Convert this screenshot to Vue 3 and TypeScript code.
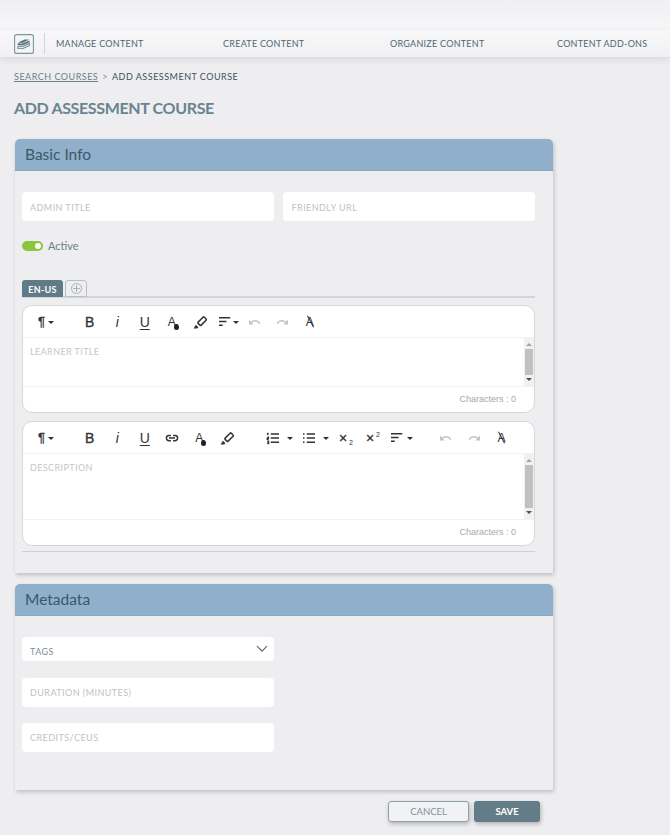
<script setup lang="ts">
type Tool = { id: string; w: number; text?: string; cls?: string; d?: string; tip?: string; fill?: boolean; caret?: boolean; dim?: boolean; sub?: string; sup?: string; drop?: boolean; after?: number };

const paths: Record<string, string> = {
  brush: 'M9.5 12.2l6.6-6.6c.5-.5 1.1-.5 1.6 0l2.4 2.4c.5.5.5 1.1 0 1.6l-6.6 6.6c-.5.5-1.1.5-1.6 0l-2.4-2.4c-.5-.5-.5-1.1 0-1.6z',
  brushTip: 'M3.5 20.5l3-5 3.4 3.4-1.6 1.6z',
  align: 'M4 6.2h15M4 11.2h10M4 16.2h5',
  undo: 'M4 8.8v6.4h6.2l-2.3-2.3c3-2.6 7-2 9.6 1.7l1.8-1.1c-3-4.8-8.5-5.6-12.8-2.1z',
  redo: 'M20 8.8v6.4h-6.2l2.3-2.3c-3-2.6-7-2-9.6 1.7l-1.8-1.1c3-4.8 8.5-5.6 12.8-2.1z',
  link: 'M10.5 8.5H8a3.5 3.5 0 0 0 0 7h2.5M13.5 8.5H16a3.5 3.5 0 0 1 0 7h-2.5M8 12h8',
  ol: 'M9 6.5h11M9 12h11M9 17.5h11M5 5v3M4.4 11h1.4v1.6H4.4v1.2h1.6M4.4 16.4h1.6v3H4.4M4.6 17.9H6',
  ul: 'M9 6.5h11M9 12h11M9 17.5h11M4 6.5h2M4 12h2M4 17.5h2',
};

const base: Tool[] = [
  { id: 'para', w: 48, text: '¶', cls: 'para', caret: true },
  { id: 'b', w: 27.5, text: 'B', cls: 'bold' },
  { id: 'i', w: 27.5, text: 'i', cls: 'ital' },
  { id: 'u', w: 27.5, text: 'U', cls: 'under' },
];

const first: Tool[] = [
  ...base,
  { id: 'color', w: 27.5, text: 'A', cls: 'alpha', drop: true },
  { id: 'brush', w: 27.5, d: paths.brush, tip: paths.brushTip },
  { id: 'align', w: 27.5, d: paths.align, cls: 'left2', caret: true },
  { id: 'undo', w: 27.5, d: paths.undo, fill: true, dim: true },
  { id: 'redo', w: 27.5, d: paths.redo, fill: true, dim: true },
  { id: 'clear', w: 27.5, text: 'A', cls: 'clear' },
];

const second: Tool[] = [
  ...base,
  { id: 'link', w: 27.5, d: paths.link },
  { id: 'color', w: 27.5, text: 'A', cls: 'alpha', drop: true },
  { id: 'brush', w: 27.5, d: paths.brush, tip: paths.brushTip, after: 18 },
  { id: 'ol', w: 36, d: paths.ol, cls: 'left4', caret: true },
  { id: 'ul', w: 36, d: paths.ul, cls: 'left4', caret: true },
  { id: 'sub', w: 28, text: '×', cls: 'times shift2', sub: '2' },
  { id: 'sup', w: 28, text: '×', cls: 'times shift3', sup: '2' },
  { id: 'align', w: 28, d: paths.align, cls: 'left4', caret: true, after: 17 },
  { id: 'undo', w: 28, d: paths.undo, fill: true, dim: true },
  { id: 'redo', w: 28, d: paths.redo, fill: true, dim: true },
  { id: 'clear', w: 27, text: 'A', cls: 'clear' },
];

const editors = [
  { id: 'title', label: 'LEARNER TITLE', tools: first, cls: 'short' },
  { id: 'desc', label: 'DESCRIPTION', tools: second, cls: 'tall' },
];

const nav = ['MANAGE CONTENT', 'CREATE CONTENT', 'ORGANIZE CONTENT', 'CONTENT ADD-ONS'];
</script>

<template>
  <div class="page">
    <div class="topband"></div>
    <nav class="navbar">
      <span class="logo">
        <svg width="20" height="20" viewBox="0 0 20 20">
          <rect x="0.6" y="0.6" width="18.8" height="18.8" rx="2" fill="#f4f5f6" stroke="#7d95a1" stroke-width="1.1" />
          <path d="M4 8.6l6.6-3.2h4.8l-6.8 3.6z" fill="#5c7480" />
          <path d="M3.6 9.6c1.2-.7 3-.5 5 0l7-3.2v2l-7 3.2c-2-.5-3.8-.6-5 0z" fill="#5c7480" />
          <path d="M3.8 12.6c1.1-.6 2.9-.4 4.8.1l7-3.2v2l-7 3.2c-2-.5-3.7-.6-4.8 0z" fill="none" stroke="#5c7480" stroke-width=".9" />
        </svg>
      </span>
      <span class="divider"></span>
      <ul class="menu">
        <li v-for="item in nav" :key="item">{{ item }}</li>
      </ul>
    </nav>

    <main class="main">
      <div class="crumbs"><a>SEARCH COURSES</a><i>&gt;</i><span>ADD ASSESSMENT COURSE</span></div>
      <h1>ADD ASSESSMENT COURSE</h1>

      <section class="card basic">
        <h2>Basic Info</h2>
        <div class="body">
          <div class="row">
            <div class="field">ADMIN TITLE</div>
            <div class="field url">FRIENDLY URL</div>
          </div>
          <div class="active"><span class="toggle"><b></b></span><span class="active-label">Active</span></div>
          <div class="tabs">
            <span class="tab">EN-US</span>
            <span class="add">
              <svg width="13" height="13" viewBox="0 0 13 13" fill="none" stroke="#a3adb3" stroke-width=".9"><circle cx="6.5" cy="6.5" r="5" /><path d="M6.5 3v7M3 6.5h7" /></svg>
            </span>
          </div>
          <div v-for="ed in editors" :key="ed.id" class="editor" :class="ed.cls">
            <div class="toolbar">
              <span
                v-for="t in ed.tools"
                :key="t.id"
                class="tool"
                :class="[{ dim: t.dim }, t.id === 'para' ? 'first' : '']"
                :style="{ width: t.w + 'px', marginRight: (t.after ?? 0) + 'px' }"
              >
                <span v-if="t.text" class="glyph" :class="t.cls">{{ t.text }}<sub v-if="t.sub">{{ t.sub }}</sub><sup v-if="t.sup">{{ t.sup }}</sup><em v-if="t.drop"></em></span>
                <svg v-else :class="t.cls" width="18" height="18" viewBox="0 0 24 24" :fill="t.fill ? 'currentColor' : 'none'" :stroke="t.fill ? 'none' : 'currentColor'" stroke-width="2">
                  <path :d="t.d" />
                  <path v-if="t.tip" :d="t.tip" fill="currentColor" stroke="none" />
                </svg>
                <span v-if="t.caret" class="caret"></span>
              </span>
            </div>
            <div class="edit-body">
              <div class="ph">{{ ed.label }}</div>
              <div class="scroll"><span class="up"></span><span class="thumb"></span><span class="down"></span></div>
            </div>
            <div class="count">Characters : 0</div>
          </div>
          <hr />
        </div>
      </section>

      <section class="card meta">
        <h2>Metadata</h2>
        <div class="body">
          <div class="field half tags">
            <span>TAGS</span>
            <svg width="12" height="8" viewBox="0 0 12 8" fill="none" stroke="#5d6468" stroke-width="1.1"><path d="M1 1.2l5 5 5-5" /></svg>
          </div>
          <div class="field half dur">DURATION (MINUTES)</div>
          <div class="field half cred">CREDITS/CEUS</div>
        </div>
      </section>

      <div class="actions">
        <button class="cancel">CANCEL</button>
        <button class="save">SAVE</button>
      </div>
    </main>
  </div>
</template>

<style>
html, body { margin: 0; background: #eeeef0; }
</style>

<style scoped>
* { box-sizing: border-box; }
.page { width: 670px; height: 835px; overflow: hidden; background: #eeeef0; font-family: Lato, "Open Sans", sans-serif; }
.topband { height: 30px; background: linear-gradient(#f0f0f2, #f7f7f9); }
.navbar { position: relative; height: 27px; display: flex; align-items: center; padding-left: 14px; background: linear-gradient(#f8f8f9, #f1f1f3); box-shadow: 0 2px 8px rgba(0, 0, 0, .1); }
.logo { display: flex; width: 20px; height: 20px; }
.divider { width: 1px; height: 21px; margin-left: 10px; background: #d3d6d8; }
.menu { list-style: none; margin: 0 0 0 11px; padding: 0; flex: 1; display: flex; font-size: 9px; letter-spacing: .26px; color: #50666f; }
.menu li:nth-child(1) { width: 167px; }
.menu li:nth-child(2) { width: 167px; }
.menu li:nth-child(3) { width: 167px; }
.main { padding: 13px 0 0 15px; }
.crumbs { margin-left: -1px; height: 13px; line-height: 13px; font-size: 9px; letter-spacing: .5px; color: #41515a; display: flex; }
.crumbs a { color: #6a7f8a; text-decoration: underline; }
.crumbs i { font-style: normal; margin: 0 4px; color: #7d8b93; }
h1 { margin: 15px 0 0 -1px; height: 20px; line-height: 20px; font-size: 16px; font-weight: 700; color: #688391; letter-spacing: -.35px; }
.card { width: 538px; background: #eeeef0; border-radius: 5px 5px 0 0; box-shadow: 1px 2px 4px rgba(0, 0, 0, .2); }
.basic { margin-top: 21px; height: 434px; }
.meta { margin-top: 11px; height: 206px; }
h2 { margin: 0; height: 32px; padding-left: 10px; line-height: 31px; font-size: 15.5px; font-weight: 400; font-family: Lato, sans-serif; color: #3c5868; background: #8fafcb; border-radius: 5px 5px 0 0; border-bottom: 1px solid #86a6c2; }
.body { padding: 21px 18px 0 7px; }
.row { display: flex; gap: 9px; }
.field { flex: 1; height: 29px; padding: 1px 8px 0; border-radius: 4px; background: #fff; display: flex; align-items: center; font-size: 9px; letter-spacing: .45px; color: #bdc2c6; }
.url { padding-left: 9px; }
.dur, .cred { padding-top: 0; }
.active { margin-top: 19px; height: 12px; display: flex; align-items: center; gap: 5px; font-size: 11px; color: #6d7f8a; }
.active-label { margin-top: -2px; }
.toggle { position: relative; width: 21px; height: 10px; border-radius: 5px; background: #8cc63f; }
.toggle b { position: absolute; top: 2px; right: 2px; width: 6px; height: 6px; border-radius: 50%; background: #fff; }
.tabs { margin-top: 28px; height: 18px; display: flex; gap: 2px; border-bottom: 2px solid #d3d4d6; }
.tab { width: 41px; height: 17px; padding-top: 1px; border-radius: 3px 3px 0 0; background: #5f7b88; color: #fff; display: flex; align-items: center; justify-content: center; font-size: 9px; font-weight: 700; letter-spacing: .3px; }
.add { width: 22px; height: 17px; border: 1px solid #b5c2c9; border-radius: 3px 3px 0 0; display: flex; align-items: center; justify-content: center; }
.editor { margin-top: 8px; background: #fff; border: 1px solid #d6d7d9; border-radius: 10px; overflow: hidden; }
.tabs + .editor { margin-top: 7px; }
.short { height: 108px; }
.tall { height: 125px; }
.toolbar { height: 31px; display: flex; align-items: center; padding-left: 5px; }
.tool { position: relative; height: 20px; display: flex; align-items: center; justify-content: center; color: #333; }
.tool.dim { color: #c4c4c4; }
.left2 { margin-left: -4px; }
.left4 { margin-left: -8px; }
.glyph { position: relative; font-family: "Liberation Sans", sans-serif; font-size: 14px; line-height: 20px; color: #333; }
.bold { -webkit-text-stroke: .35px #333; }
.ital { font-style: italic; }
.under { text-decoration: underline; text-decoration-thickness: 1.2px; text-underline-offset: 2px; }
.para { font-size: 13px; margin-left: -21px; -webkit-text-stroke: .3px #333; }
.alpha { font-size: 12px; margin-left: -1px; }
.alpha em { position: absolute; left: 6px; bottom: 2px; width: 5px; height: 6px; border-radius: 50% 50% 50% 50% / 65% 65% 40% 40%; background: #222; }
.clear { font-size: 12px; }
.clear::after { content: ""; position: absolute; left: -2px; top: 9px; width: 13px; height: 1px; background: #333; transform: rotate(62deg); }
.times { font-size: 14px; -webkit-text-stroke: .35px #333; }
.shift2 { margin-left: -4px; }
.shift3 { margin-left: -6px; }
.times sub, .times sup { position: absolute; font-size: 7px; line-height: 7px; left: 10px; -webkit-text-stroke: 0; }
.times sub { bottom: 2px; }
.times sup { top: 3px; }
.caret { position: absolute; top: 9px; right: 2px; width: 0; height: 0; border: 3px solid transparent; border-top-color: #333; border-bottom: 0; }
.first .caret { right: 22px; }
.edit-body { display: flex; border-top: 1px solid #f2f2f3; border-bottom: 1px solid #f2f2f3; }
.short .edit-body { height: 50px; }
.tall .edit-body { height: 67px; }
.ph { flex: 1; padding: 8px 0 0 7px; font-size: 9px; line-height: 11px; letter-spacing: .4px; color: #c3c7ca; }
.scroll { width: 10px; display: flex; flex-direction: column; align-items: center; background: #f1f1f1; }
.thumb { width: 8px; flex: 1; background: #c1c1c1; margin: 3px 0; }
.up, .down { flex: none; width: 0; height: 0; margin-top: 5px; border: 3px solid transparent; }
.up { border-top: 0; border-bottom: 3px solid #a3a3a3; margin-bottom: 0; }
.down { border-bottom: 0; border-top: 3px solid #505050; margin: 0 0 5px; }
.count { height: 26px; padding-right: 18px; text-align: right; font-family: "Liberation Sans", sans-serif; font-size: 9px; line-height: 25px; color: #a8a8a8; }
hr { margin: 5px 0 0; border: 0; height: 1px; background: #cfd0d2; }
.half { flex: none; width: 252px; }
.half + .half { margin-top: 16px; }
.half + .dur { margin-top: 17px; }
.tags { height: 24px; justify-content: space-between; align-items: flex-end; padding: 0 6px 4px 8px; color: #7f8c94; }
.tags svg { margin-bottom: 4px; }
.actions { margin-top: 11px; padding-left: 373px; display: flex; gap: 5px; }
button { height: 21px; padding: 0; border-radius: 3px; font-family: Lato, sans-serif; font-size: 9.5px; box-shadow: 1px 2px 4px rgba(0, 0, 0, .25); }
.cancel { width: 81px; border: 1px solid #8ba3b0; background: #f2f2f4; color: #7f929c; }
.save { width: 66px; border: 0; background: #637d88; color: #fff; font-weight: 700; }
</style>
